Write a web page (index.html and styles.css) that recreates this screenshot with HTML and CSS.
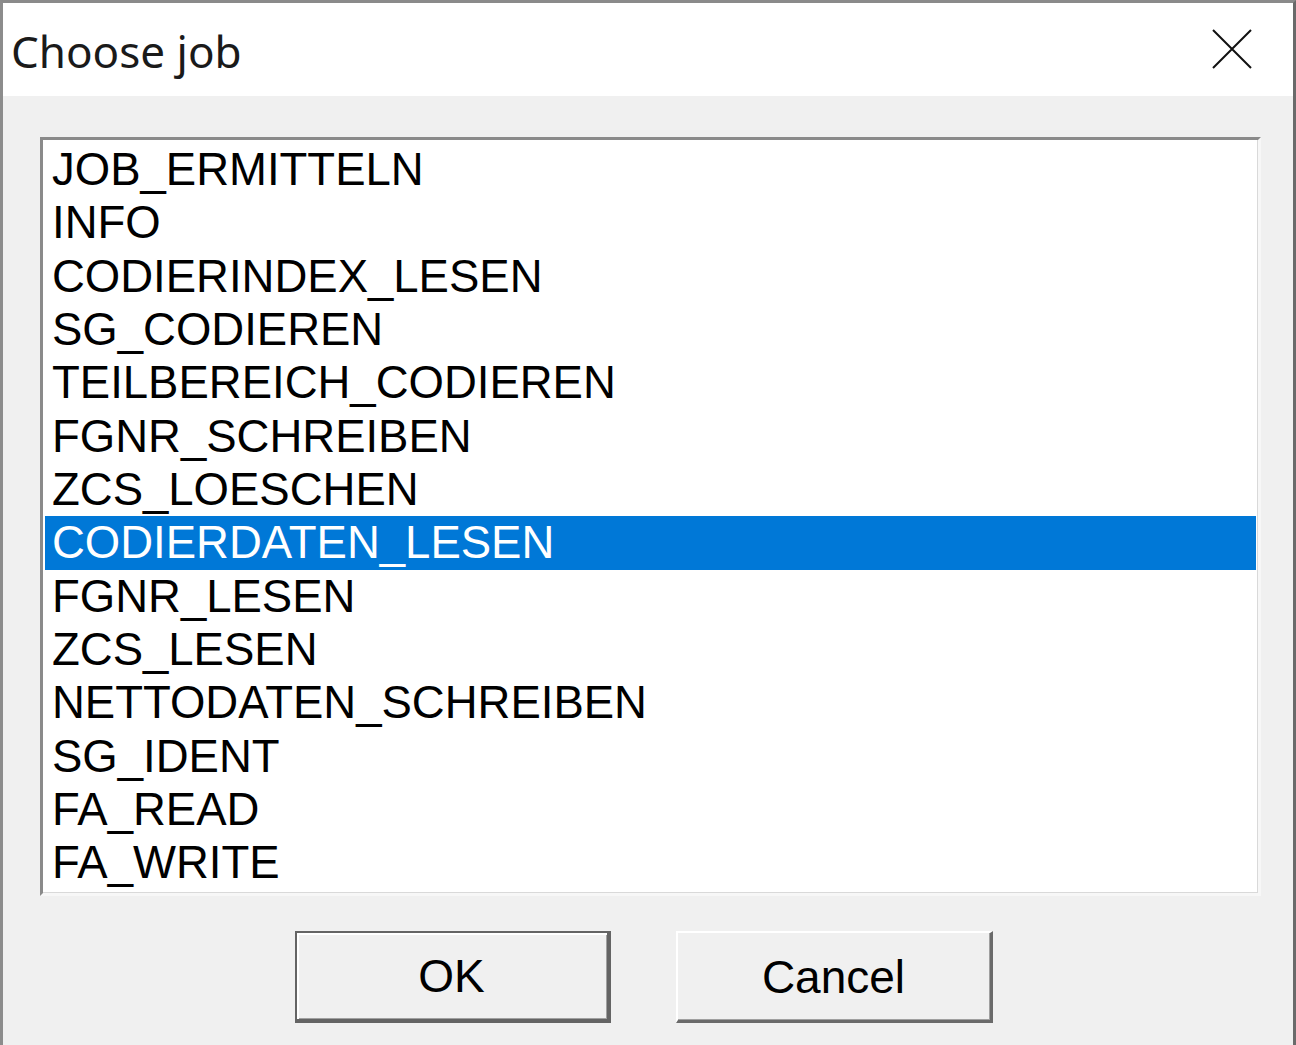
FILE: index.html
```html
<!DOCTYPE html>
<html>
<head>
<meta charset="utf-8">
<title>Choose job</title>
<link rel="stylesheet" href="styles.css">
</head>
<body>
<div class="window">
  <div class="titlebar">
    <span class="title">Choose job</span>
    <button class="close" aria-label="Close">
      <svg width="40" height="40" viewBox="0 0 40 40"><path d="M1 1 L39 39 M39 1 L1 39" stroke="#111" stroke-width="2" fill="none"/></svg>
    </button>
  </div>
  <div class="body">
    <div class="listbox">
      <div class="item">JOB_ERMITTELN</div>
      <div class="item">INFO</div>
      <div class="item">CODIERINDEX_LESEN</div>
      <div class="item">SG_CODIEREN</div>
      <div class="item">TEILBEREICH_CODIEREN</div>
      <div class="item">FGNR_SCHREIBEN</div>
      <div class="item">ZCS_LOESCHEN</div>
      <div class="item selected">CODIERDATEN_LESEN</div>
      <div class="item">FGNR_LESEN</div>
      <div class="item">ZCS_LESEN</div>
      <div class="item">NETTODATEN_SCHREIBEN</div>
      <div class="item">SG_IDENT</div>
      <div class="item">FA_READ</div>
      <div class="item">FA_WRITE</div>
    </div>
    <div class="buttons">
      <button class="btn btn-default">OK</button>
      <button class="btn">Cancel</button>
    </div>
  </div>
</div>
</body>
</html>
```

FILE: styles.css
```css
html, body {
  margin: 0;
  padding: 0;
  background: #f0f0f0;
}
.window {
  width: 1296px;
  height: 1045px;
  box-sizing: border-box;
  border-top: 3px solid #8a8a8a;
  border-left: 3px solid #8c8c8c;
  border-right: 3px solid #6a6a6a;
  background: #f0f0f0;
  display: flex;
  flex-direction: column;
  overflow: hidden;
}
.titlebar {
  height: 93px;
  background: #ffffff;
  display: flex;
  align-items: center;
  justify-content: space-between;
  padding-left: 8px;
  padding-right: 41px;
  flex-shrink: 0;
}
.title {
  font-family: "Noto Sans", "Open Sans", sans-serif;
  font-size: 44px;
  color: #1a1a1a;
  line-height: 1;
  margin-top: 2px;
}
.close {
  border: 0;
  background: transparent;
  padding: 0;
  width: 40px;
  height: 40px;
  margin-top: -2px;
  display: flex;
}
.body {
  padding: 41px 32px 0 37px;
  display: flex;
  flex-direction: column;
}
.listbox {
  height: 759px;
  box-sizing: border-box;
  background: #ffffff;
  border-top: 3px solid #8a8a8a;
  border-left: 3px solid #8a8a8a;
  border-right: 3px solid #f7f7f7;
  border-bottom: 3px solid #f7f7f7;
  box-shadow: inset -1px -1px 0 #d9d9d9;
  padding: 3px 2px 0 2px;
}
.item {
  height: 53.33px;
  line-height: 53.33px;
  font-family: "Liberation Sans", Arial, sans-serif;
  font-size: 45.5px;
  color: #000;
  padding-left: 7px;
  white-space: nowrap;
}
.item.selected {
  background: #0078d7;
  color: #ffffff;
}
.buttons {
  display: flex;
  justify-content: center;
  gap: 65px;
  margin-top: 35px;
  padding-right: 14px;
}
.btn {
  width: 317px;
  height: 92px;
  box-sizing: border-box;
  background: #f0f0f0;
  font-family: "Liberation Sans", Arial, sans-serif;
  font-size: 46px;
  color: #000;
  padding: 0;
  border-style: solid;
  border-width: 2px 3px 3px 2px;
  border-color: #ffffff #6a6a6a #6a6a6a #ffffff;
  box-shadow: inset -1px -1px 0 #a0a0a0;
}
.btn-default {
  width: 316px;
  border-width: 2px 4px 4px 2px;
  border-color: #646464;
  box-shadow: inset 2px 2px 0 #ffffff, inset -1px -1px 0 #a0a0a0;
}
```
